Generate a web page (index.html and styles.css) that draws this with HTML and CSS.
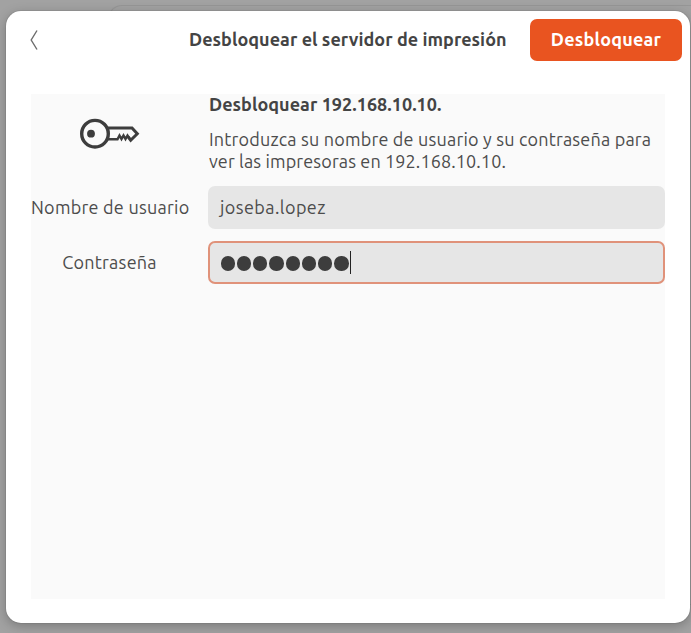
FILE: index.html
```html
<!DOCTYPE html>
<html lang="es">
<head>
<meta charset="utf-8">
<title>Desbloquear el servidor de impresión</title>
<link rel="stylesheet" href="styles.css">
</head>
<body>
<div class="parent-window"></div>
<main class="dialog">
  <header class="headerbar">
    <button class="back" aria-label="Atrás">
      <svg width="10" height="22" viewBox="0 0 10 22"><path d="M8 1.500 2.200 11 8 20.500" fill="none" stroke="#6c6c6c" stroke-width="1.400"/></svg>
    </button>
    <h1 class="title"><span>Desbloquear el servidor de impresión</span></h1>
    <button class="unlock"><span>Desbloquear</span></button>
  </header>
  <section class="content">
    <div class="icon-cell">
      <svg width="64" height="36" viewBox="0 0 64 36" fill="none" stroke="#3d3d3d">
        <circle cx="17" cy="17.700" r="13.300" stroke-width="3.400"/>
        <circle cx="13" cy="17.700" r="3.900" fill="#3d3d3d" stroke="none"/>
        <path d="M30 12H54L59.300 17.700 52.700 24.300 50.300 21" stroke-width="3"/>
        <path d="M30 23.300H39.500L41.500 19.500 43.500 23 45.500 19.500 47.500 23 49.500 19.500 51.500 22.500" stroke-width="2.400"/>
      </svg>
    </div>
    <div class="message">
      <h2><span>Desbloquear 192.168.10.10.</span></h2>
      <p><span class="line-one">Introduzca su nombre de usuario y su contraseña para</span><br><span class="line-two">ver las impresoras en 192.168.10.10.</span></p>
    </div>
    <label class="user-label"><span>Nombre de usuario</span></label>
    <div class="entry"><span>joseba.lopez</span></div>
    <label class="pass-label"><span>Contraseña</span></label>
    <div class="entry focused"><i class="dot"></i><i class="dot"></i><i class="dot"></i><i class="dot"></i><i class="dot"></i><i class="dot"></i><i class="dot"></i><i class="dot"></i><i class="caret"></i></div>
  </section>
</main>
</body>
</html>
```
FILE: styles.css
```css
* { box-sizing: border-box; }
body {
  margin: 0;
  width: 691px;
  height: 633px;
  overflow: hidden;
  padding: 11px 1px 10px 6px;
  background: #a2a2a2;
  color: #4c4c4c;
  font: 18px/22px "Ubuntu", "Noto Sans", sans-serif;
}
.parent-window {
  position: absolute;
  left: 108px;
  top: 5px;
  width: 583px;
  height: 600px;
  border: 1px solid #969696;
  border-right: 0;
  border-radius: 14px 0 0 14px;
}
.dialog {
  position: relative;
  height: 612px;
  padding: 0 25px 25px;
  background: #fff;
  border-radius: 15px;
  box-shadow: 0 0 0 1px rgba(0, 0, 0, .06), 0 3px 12px rgba(0, 0, 0, .25);
}
button { border: 0; padding: 0; font: inherit; }
span { white-space: nowrap; }
.headerbar {
  height: 83px;
  margin: 0 -17px 0 -25px;
  padding-top: 8px;
  display: flex;
  align-items: flex-start;
}
.back {
  width: 56px;
  height: 42px;
  background: none;
  display: grid;
  place-items: center;
}
.title {
  margin: 0 0 0 127px;
  width: 341px;
  font-size: 18px;
  line-height: 40px;
  font-weight: 700;
  letter-spacing: .04px;
  color: #444;
}
.unlock {
  width: 152px;
  height: 42px;
  padding-bottom: 2px;
  border-radius: 7px;
  background: #e95420;
  color: #fff;
  font-weight: 700;
  letter-spacing: .22px;
}
.content {
  height: 505px;
  width: 634px;
  background: #fafafa;
  display: grid;
  grid-template-columns: 157px 457px;
  grid-template-rows: 79px 42px 42px;
  column-gap: 20px;
  row-gap: 13px;
  align-content: start;
}
.icon-cell { text-align: center; padding: 22px 0 0 1px; }
.message { padding-left: 1px; }
h2 {
  margin: 0 0 14px;
  font-size: 18px;
  line-height: 20px;
  font-weight: 700;
  letter-spacing: .04px;
  color: #444;
}
p { margin: 0; line-height: 22px; }
.line-one { letter-spacing: .19px; }
.line-two { letter-spacing: .12px; }
label { text-align: center; line-height: 42px; }
.user-label { letter-spacing: .25px; }
.pass-label { letter-spacing: .25px; }
.entry {
  height: 43px;
  padding-left: 12px;
  border-radius: 7px;
  background: #e6e6e6;
  display: flex;
  align-items: center;
  line-height: 40px;
  padding-bottom: 2px;
  letter-spacing: .42px;
}
.focused { border: 2px solid #e0927a; padding: 0 0 0 10.600px; }
.dot {
  width: 14.400px;
  height: 14.400px;
  margin-right: 1.870px;
  border-radius: 50%;
  background: #3d3d3d;
  position: relative;
  top: 1px;
}
.dot:nth-child(8) { margin-right: 1px; }
.caret { width: 1px; height: 23px; background: #222; }
```
